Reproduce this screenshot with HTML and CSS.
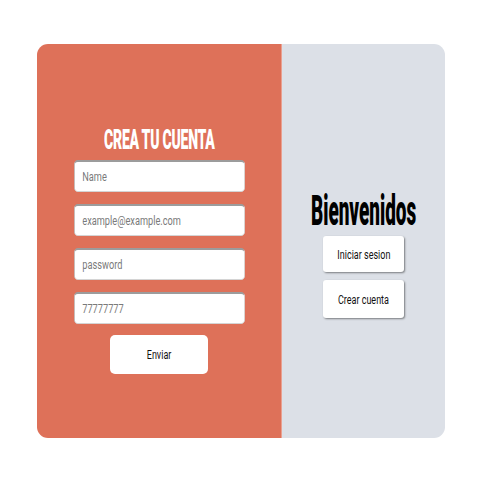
FILE: index.html
```html
<!DOCTYPE html>
<html lang="es">
<head>
<meta charset="utf-8">
<title>Crea tu cuenta</title>
<link rel="stylesheet" href="styles.css">
</head>
<body>
<main class="card">
  <section class="panel-left">
    <h1 class="title-create"><span class="sq">CREA TU CUENTA</span></h1>
    <form class="form">
      <input class="field" type="text" placeholder="Name">
      <input class="field" type="email" placeholder="example@example.com">
      <input class="field" type="password" placeholder="password">
      <input class="field" type="tel" placeholder="77777777">
      <button class="btn btn-send" type="button"><span class="sq">Enviar</span></button>
    </form>
  </section>
  <section class="panel-right">
    <h2 class="title-welcome"><span class="sq2">Bienvenidos</span></h2>
    <button class="btn btn-side" type="button"><span class="sq">Iniciar sesion</span></button>
    <button class="btn btn-side btn-side-b" type="button"><span class="sq">Crear cuenta</span></button>
  </section>
</main>
</body>
</html>
```
FILE: styles.css
```css
* { box-sizing: border-box; }
html, body { margin: 0; padding: 0; background: #ffffff; }
body {
  font-family: Roboto, "Liberation Sans", sans-serif;
  padding: 44px 0 0 37px;
}
.card {
  width: 408px;
  height: 394px;
  display: flex;
  border-radius: 11px;
  overflow: hidden;
}
.panel-left {
  width: 244px;
  flex: 0 0 244px;
  background: #de7159;
  display: flex;
  flex-direction: column;
  align-items: center;
  padding-top: 82px;
  min-width: 0;
}
.panel-right {
  flex: 1 1 0;
  min-width: 0;
  background: #dce0e7;
  display: flex;
  flex-direction: column;
  align-items: center;
  padding-top: 145px;
  border-left: 1px solid #e9a090;
}
.sq { display: inline-block; transform: scaleX(0.72); }
.sq2 { display: inline-block; transform: scaleX(0.44); }
.title-create {
  margin: 0;
  color: #ffffff;
  font-size: 27px;
  font-weight: 900;
  line-height: 28px;
  letter-spacing: -0.5px;
  white-space: nowrap;
}
.title-create .sq { transform: scaleX(0.52); }
.form {
  width: 171px;
  display: flex;
  flex-direction: column;
  align-items: flex-start;
  margin-top: 6px;
}
.field {
  width: 228px;
  height: 32px;
  margin-bottom: 12px;
  transform: scaleX(0.75);
  transform-origin: left center;
  border: 1px solid #d4d4d4;
  border-top: 2px solid #9c9c9c;
  border-left-color: #b9b9b9;
  border-radius: 5px;
  background: #ffffff;
  padding: 0 10px;
  font-family: Roboto, sans-serif;
  font-size: 12.3px;
  color: #333;
}
.field::placeholder { color: #7a7a7a; }
.btn {
  background: #ffffff;
  border: none;
  font-family: Roboto, sans-serif;
  font-size: 12.5px;
  color: #111;
  cursor: pointer;
  white-space: nowrap;
  padding: 0;
}
.btn-send {
  align-self: center;
  width: 98px;
  height: 39px;
  border-radius: 5px;
  margin-top: -1px;
}
.title-welcome {
  margin: 0 0 5px 0;
  color: #000;
  font-size: 43px;
  font-weight: 900;
  line-height: 42px;
  white-space: nowrap;
}
.btn-side {
  width: 81px;
  height: 36px;
  border-radius: 3px;
  margin-bottom: 8px;
  box-shadow: 1px 1px 2px rgba(0,0,0,0.45);
}
.btn-side-b { height: 38px; }
```
